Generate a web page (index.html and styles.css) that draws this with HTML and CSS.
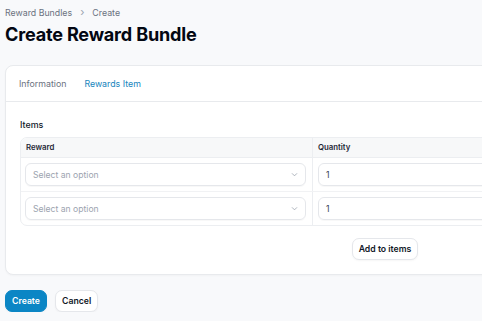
FILE: index.html
```html
<!doctype html>
<html lang="en">
<head>
<meta charset="UTF-8">
<title>Create Reward Bundle</title>
<link rel="stylesheet" href="styles.css">
</head>
<body>
	<div class="page">
		<!-- breadcrumb + heading -->
		<nav class="crumbs">
			<span>Reward Bundles</span>
			<span class="sep">&#8250;</span>
			<span>Create</span>
		</nav>
		<h1 class="title">Create Reward Bundle</h1>

		<div class="card">
			<div class="tabs">
				<span class="tab">Information</span>
				<span class="tab active">Rewards Item</span>
			</div>
			<div class="card_body">
				<div class="label">Items</div>
				<div class="repeater">
					<div class="head">
						<div class="col_reward">Reward</div>
						<div class="col_qty">Quantity</div>
					</div>
					<div class="row">
						<div class="col_reward">
							<div class="select">
								<span>Select an option</span>
								<svg width="9" height="9" viewBox="0 0 20 20"><path d="M5 8l5 5 5-5" fill="none" stroke="#9ca3af" stroke-width="1.8" stroke-linecap="round" stroke-linejoin="round"/></svg>
							</div>
						</div>
						<div class="col_qty"><div class="input">1</div></div>
					</div>
					<div class="row">
						<div class="col_reward">
							<div class="select">
								<span>Select an option</span>
								<svg width="9" height="9" viewBox="0 0 20 20"><path d="M5 8l5 5 5-5" fill="none" stroke="#9ca3af" stroke-width="1.8" stroke-linecap="round" stroke-linejoin="round"/></svg>
							</div>
						</div>
						<div class="col_qty"><div class="input">1</div></div>
					</div>
				</div>
				<div class="add_wrap">
					<button class="btn">Add to items</button>
				</div>
			</div>
		</div>

		<div class="actions">
			<button class="btn primary">Create</button>
			<button class="btn">Cancel</button>
		</div>
	</div>
</body>
</html>
```

FILE: styles.css
```css
body{
	margin:0; background-color:#f8f9fb;
	font-family:Inter, "Noto Sans", sans-serif;
	color:#111827; overflow:hidden;
}
.page{
	width:760px; padding:5px 0 0 5px;
}
.crumbs{
	font-size:8.8px; color:#6b7280;
	display:flex; gap:8px; align-items:center;
	height:14px;
}
.crumbs .sep{ color:#9ca3af; font-size:11px; }
.title{
	margin:2px 0 0 0; font-size:18.1px; font-weight:700;
	color:#030712; letter-spacing:-0.2px; line-height:26px;
}
.card{
	margin-top:18px; background:#fff;
	border:1px solid #e8eaed; border-radius:8px;
	box-shadow:0 1px 2px rgba(0,0,0,0.03);
}
.tabs{
	display:flex; gap:6px; padding:0 0 0 7px;
	height:35px; align-items:center;
	border-bottom:1px solid #e8eaed;
}
.tab{
	font-size:8.8px; color:#6b7280; font-weight:400;
	padding:4px 6px; border-radius:6px;
}
.tab.active{ color:#1785bd; }
.card_body{ padding:17px 14px 14px 14px; }
.label{ font-size:8.9px; font-weight:500; color:#111827; }
.repeater{
	margin-top:7px; border:1px solid #eceef1;
	border-radius:7px; overflow:hidden;
}
.head, .row{ display:flex; }
.head{
	height:19px; background:#f7f8f9; align-items:center;
	font-size:7.8px; font-weight:600; color:#1f2937;
	border-bottom:1px solid #eceef1;
}
.col_reward{ width:291px; box-sizing:border-box; padding:0 6px 0 4px; }
.col_qty{ flex:1; border-left:1px solid #eceef1; padding:0 6px 0 5px; }
.head .col_reward, .head .col_qty{ height:19px; line-height:19px; }
.head .col_reward{ padding-left:5px; }
.row{ height:33px; }
.row + .row{ border-top:1px solid #f1f2f4; }
.row .col_reward, .row .col_qty{ display:flex; align-items:flex-start; padding-top:5px; }
.select, .input{
	flex:1; height:23px; box-sizing:border-box;
	border:1px solid #e5e7eb; border-radius:6px;
	box-shadow:0 1px 1px rgba(0,0,0,0.03);
	display:flex; align-items:center; justify-content:space-between;
	padding:0 6px 0 7px; font-size:8.6px;
}
.select span{ color:#9ca3af; }
.input{ color:#374151; }
.add_wrap{ display:flex; justify-content:center; margin-top:12px; }
.btn{
	font-family:inherit; font-size:8.7px; font-weight:600;
	color:#111827; background:#fff; height:22px;
	border:1px solid #e5e7eb; border-radius:7px;
	padding:0 6px; box-shadow:0 1px 2px rgba(0,0,0,0.04);
}
.actions{ display:flex; gap:8px; margin-top:15px; }
.btn.primary{ background:#0b86c5; color:#fff; border-color:#0b86c5; }
```
